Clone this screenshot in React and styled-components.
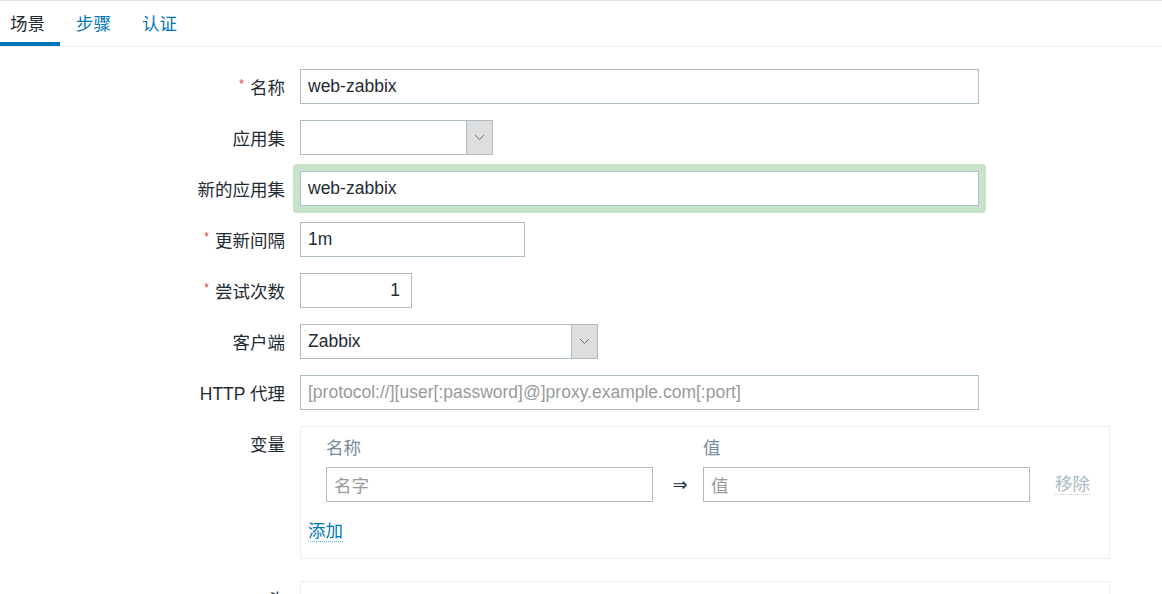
import React from 'react';
import styled, { createGlobalStyle } from 'styled-components';

// ---------------------------------------------------------------------------
// ------------------------------- Global ------------------------------------
// ---------------------------------------------------------------------------
const GlobalStyle = createGlobalStyle`
  html, body {
    margin: 0;
    padding: 0;
    overflow: hidden;
    background: #fff;
  }
  body {
    font-family: "Liberation Sans", Arial, "Noto Sans CJK SC", sans-serif;
    font-size: 17.5px;
    color: #1f2c33;
  }
`;

// ---------------------------------------------------------------------------
// ------------------------------- Tabs --------------------------------------
// ---------------------------------------------------------------------------
const TabBar = styled.div`
  display: flex;
  height: 45px;
  border-top: 1px solid #dfe4e7;
  border-bottom: 1px solid #ebeef0;
  margin-left: -5px;
`;

const Tab = styled.div`
  display: flex;
  align-items: center;
  padding: 0 15px;
  margin-right: 1px;
  color: ${(p) => (p.active ? '#1f2c33' : '#0275b8')};
  border-bottom: 4px solid ${(p) => (p.active ? '#0275b8' : 'transparent')};
  box-sizing: border-box;
  height: 45px;
  padding-top: 2px;
`;

// ---------------------------------------------------------------------------
// ------------------------------- Form --------------------------------------
// ---------------------------------------------------------------------------
const Form = styled.div`
  display: grid;
  grid-template-columns: 285px 1fr;
  column-gap: 15px;
  row-gap: 16px;
  padding-top: 22px;
`;

const Label = styled.div`
  display: flex;
  align-items: center;
  justify-content: flex-end;
  height: 35px;
  white-space: nowrap;
  margin-top: ${(p) => p.offset || 0}px;
`;

const Star = styled.span`
  color: #e33734;
  font-size: 12px;
  margin-right: 6px;
  position: relative;
  top: -3px;
`;

const Field = styled.div`
  display: flex;
  align-items: flex-start;
  margin-top: ${(p) => p.offset || 0}px;
`;

const Input = styled.div`
  box-sizing: border-box;
  width: ${(p) => p.w}px;
  height: 35px;
  border: 1px solid #acbbc4;
  background: #fff;
  display: flex;
  align-items: center;
  justify-content: ${(p) => (p.right ? 'flex-end' : 'flex-start')};
  padding: 0 ${(p) => (p.right ? 11 : 7)}px 0 7px;
  color: ${(p) => (p.placeholder ? '#9a9a9a' : '#1f2c33')};
  white-space: nowrap;
  overflow: hidden;
  border-radius: ${(p) => (p.glow ? '1px' : '0')};
  box-shadow: ${(p) => (p.glow ? '0 0 0 7px #c7e4ca' : 'none')};
`;

const Select = styled.div`
  box-sizing: border-box;
  width: ${(p) => p.w}px;
  height: 35px;
  border: 1px solid #acbbc4;
  display: flex;
  background: #fff;
`;

const SelectValue = styled.div`
  flex: 1;
  display: flex;
  align-items: center;
  padding: 0 7px;
`;

const SelectButton = styled.div`
  width: 25px;
  background: #dedede;
  border-left: 1px solid #acbbc4;
  display: flex;
  align-items: center;
  justify-content: center;
`;

// ---------------------------------------------------------------------------
// ------------------------------- Variables ---------------------------------
// ---------------------------------------------------------------------------
const VarBox = styled.div`
  box-sizing: border-box;
  width: 810px;
  min-height: ${(p) => p.minH || 0}px;
  border: 1px solid #ebeef0;
  padding: 4px 7px 12px;
`;

const VarGrid = styled.div`
  display: grid;
  grid-template-columns: 18px 327px 50px 327px auto;
  row-gap: 6px;
  align-items: center;
`;

const ColHead = styled.div`
  height: 30px;
  display: flex;
  align-items: center;
  color: #768d99;
`;

const Arrow = styled.div`
  text-align: center;
  padding-left: 4px;
  font-family: "DejaVu Sans", sans-serif;
  font-size: 18px;
  color: #1f2c33;
`;

const Link = styled.span`
  color: ${(p) => (p.disabled ? '#acbbc4' : '#0275b8')};
  border-bottom: 1px dotted ${(p) => (p.disabled ? '#c5ced4' : '#5ab0e0')};
  line-height: 20px;
`;

const RemoveCell = styled.div`
  padding-left: 25px;
`;

const AddRow = styled.div`
  height: 30px;
  display: flex;
  align-items: center;
  margin-top: 14px;
`;

const Chevron = () => (
  <svg width="11" height="7" viewBox="0 0 11 7">
    <polyline points="1,1 5.5,5.5 10,1" fill="none" stroke="#6a6a6a" strokeWidth="1" />
  </svg>
);

const Required = () => <Star>*</Star>;

const App = () => {
  return (
    <>
      <GlobalStyle />
      <TabBar>
        <Tab active>场景</Tab>
        <Tab>步骤</Tab>
        <Tab>认证</Tab>
      </TabBar>

      <Form>
        <Label><Required />名称</Label>
        <Field><Input w={679}>web-zabbix</Input></Field>

        <Label>应用集</Label>
        <Field>
          <Select w={193}>
            <SelectValue />
            <SelectButton><Chevron /></SelectButton>
          </Select>
        </Field>

        <Label>新的应用集</Label>
        <Field><Input w={679} glow>web-zabbix</Input></Field>

        <Label><Required />更新间隔</Label>
        <Field><Input w={225}>1m</Input></Field>

        <Label><Required />尝试次数</Label>
        <Field><Input w={112} right>1</Input></Field>

        <Label>客户端</Label>
        <Field>
          <Select w={298}>
            <SelectValue>Zabbix</SelectValue>
            <SelectButton><Chevron /></SelectButton>
          </Select>
        </Field>

        <Label>HTTP 代理</Label>
        <Field>
          <Input w={679} placeholder="true">[protocol://][user[:password]@]proxy.example.com[:port]</Input>
        </Field>

        <Label>变量</Label>
        <Field>
          <VarBox>
            <VarGrid>
              <div />
              <ColHead>名称</ColHead>
              <div />
              <ColHead>值</ColHead>
              <div />

              <div />
              <Input w={327} placeholder="true">名字</Input>
              <Arrow>⇒</Arrow>
              <Input w={327} placeholder="true">值</Input>
              <RemoveCell><Link disabled>移除</Link></RemoveCell>
            </VarGrid>
            <AddRow><Link>添加</Link></AddRow>
          </VarBox>
        </Field>

        <Label offset={6}>头</Label>
        <Field offset={6}>
          <VarBox minH={120} />
        </Field>
      </Form>
    </>
  );
};

export default App;
